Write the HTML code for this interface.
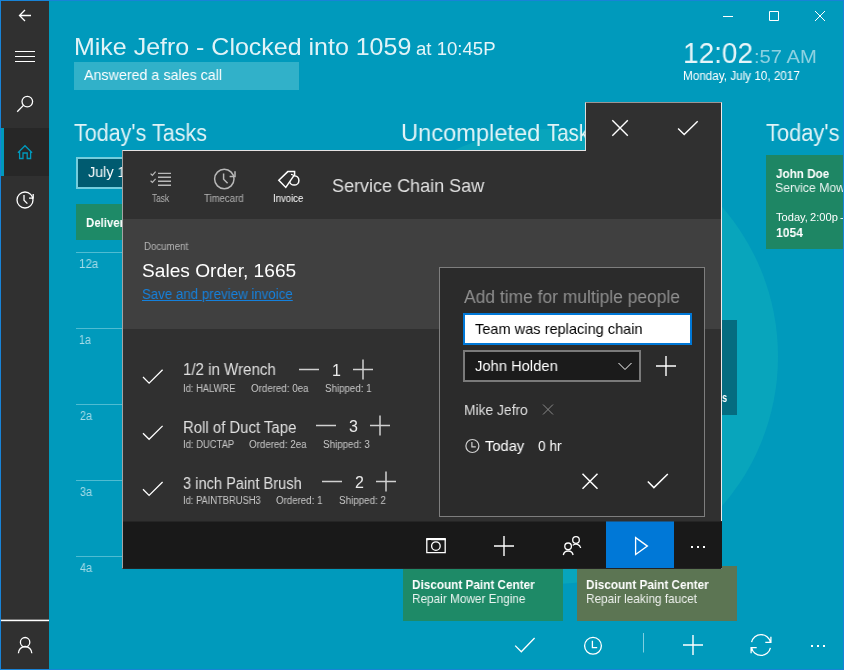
<!DOCTYPE html>
<html lang="en">
<head>
<meta charset="utf-8">
<title>Mike Jefro - Service Chain Saw</title>
<style>
html,body{margin:0;padding:0}
body{width:844px;height:670px;overflow:hidden;position:relative;background:#009abc;font-family:"Liberation Sans",sans-serif;}
#app{position:absolute;left:0;top:0;width:844px;height:670px;overflow:hidden}
.a{position:absolute}
.t{position:absolute;white-space:nowrap;line-height:1;transform-origin:0 0;will-change:transform;font-weight:400;color:#fff}
.b{font-weight:700}
svg{position:absolute;left:0;top:0;overflow:visible}
.s{fill:none;stroke:#fff;stroke-width:1.3}
.g{fill:none;stroke:#b8b8b8;stroke-width:1.5}
.hl{position:absolute;left:76px;width:300px;height:1px;background:#4fbcd2}
.card{position:absolute}
</style>
</head>
<body>
<div id="app">

<!-- decorative circle behind content -->
<div class="a" style="left:323px;top:129px;width:454.5px;height:454.5px;border-radius:50%;background:#08a5bc"></div>

<main>
<header>
<span class="t" style="left:73.5px;top:35px;font-size:24px;color:rgba(255,255,255,.88);transform:scaleX(1.0405);">Mike Jefro - Clocked into 1059</span>
<span class="t" style="left:416.0px;top:40px;font-size:18px;color:rgba(255,255,255,.9);transform:scaleX(1.0325);">at 10:45P</span>

<div class="a" style="left:74px;top:62px;width:225px;height:28px;background:#31b1c9"></div>
<span class="t" style="left:84.3px;top:67px;font-size:15px;transform:scaleX(0.9517);">Answered a sales call</span>

<span class="t" style="left:682.6px;top:39px;font-size:29px;color:rgba(255,255,255,.9);transform:scaleX(0.9643);">12:02</span>
<span class="t" style="left:753.9px;top:47px;font-size:19px;color:rgba(255,255,255,.55);transform:scaleX(1.0632);">:57 AM</span>

<span class="t" style="left:682.6px;top:70px;font-size:12px;transform:scaleX(0.9748);">Monday, July 10, 2017</span>

<!-- window controls -->
<svg width="844" height="40">
<path class="s" style="stroke-width:1" d="M723 16.5H733 M769.5 11.5H778.5V20.5H769.5Z M815 11L825 21M825 11L815 21"/>
</svg>
</header>

<section id="todays-tasks">
<span class="t" style="left:74.2px;top:122px;font-size:23px;color:rgba(255,255,255,.88);transform:scaleX(0.9366);">Today&#39;s Tasks</span>

<div class="a" style="left:76px;top:157px;width:200px;height:32px;box-sizing:border-box;border:2px solid #74cddd;background:#005b70"></div>
<span class="t" style="left:87.5px;top:164px;font-size:15px;transform:scaleX(0.9574);">July 10</span>

<div class="card" style="left:76px;top:204px;width:200px;height:36px;background:#1e8a67"></div>
<span class="t b" style="left:86.1px;top:216px;font-size:13px;transform:scaleX(0.8800);">Delivery</span>

<div class="hl" style="top:252px"></div><span class="t" style="left:78.7px;top:258px;font-size:12px;color:rgba(255,255,255,.65);transform:scaleX(0.9632);">12a</span>

<div class="hl" style="top:328px"></div><span class="t" style="left:78.8px;top:334px;font-size:12px;color:rgba(255,255,255,.65);transform:scaleX(0.8846);">1a</span>

<div class="hl" style="top:404px"></div><span class="t" style="left:79.7px;top:410px;font-size:12px;color:rgba(255,255,255,.65);transform:scaleX(0.8929);">2a</span>

<div class="hl" style="top:480px"></div><span class="t" style="left:79.7px;top:486px;font-size:12px;color:rgba(255,255,255,.65);transform:scaleX(0.8929);">3a</span>

<div class="hl" style="top:556px"></div><span class="t" style="left:79.7px;top:562px;font-size:12px;color:rgba(255,255,255,.65);transform:scaleX(0.8929);">4a</span>

</section>

<section id="uncompleted-tasks">
<span class="t" style="left:401.0px;top:121px;font-size:24px;color:rgba(255,255,255,.88);transform:scaleX(0.9855);">Uncompleted</span>
<span class="t" style="left:547.2px;top:121px;font-size:24px;color:rgba(255,255,255,.88);transform:scaleX(0.8525);">Tasks</span>

<div class="card" style="left:560px;top:320px;width:177px;height:95px;background:#056c80"></div>
<span class="t b" style="left:722.0px;top:391px;font-size:13px;transform:scaleX(0.7143);">s</span>

<div class="card" style="left:403px;top:566px;width:160px;height:55px;background:#1e8a67"></div>
<span class="t b" style="left:412.3px;top:578px;font-size:13px;transform:scaleX(0.9037);">Discount Paint Center</span>
<span class="t" style="left:412.3px;top:592px;font-size:13px;color:rgba(255,255,255,.9);transform:scaleX(0.9073);">Repair Mower Engine</span>

<div class="card" style="left:577px;top:566px;width:160px;height:55px;background:#5c7553"></div>
<span class="t b" style="left:586.1px;top:578px;font-size:13px;transform:scaleX(0.9037);">Discount Paint Center</span>
<span class="t" style="left:586.1px;top:592px;font-size:13px;color:rgba(255,255,255,.9);transform:scaleX(0.9091);">Repair leaking faucet</span>

</section>

<section id="todays-appointments">
<span class="t" style="left:766.4px;top:122px;font-size:23px;color:rgba(255,255,255,.88);transform:scaleX(0.9519);">Today&#39;s</span>

<div class="card" style="left:766px;top:155px;width:78px;height:94px;background:#1e8664"></div>
<span class="t b" style="left:776.3px;top:167px;font-size:13px;transform:scaleX(0.8983);">John Doe</span>
<span class="t" style="left:775.4px;top:181px;font-size:13px;color:rgba(255,255,255,.9);transform:scaleX(0.9412);">Service Mower</span>
<span class="t" style="left:776.3px;top:212px;font-size:11px;transform:scaleX(1.0104);word-spacing:-1px;">Today, 2:00p - 5:00p</span>
<span class="t b" style="left:776.3px;top:226px;font-size:13px;transform:scaleX(0.9310);">1054</span>

</section>

<!-- bottom command bar -->
<footer>
<svg width="844" height="670">
<path class="s" d="M515.2 645.6L521.3 651.7L534.6 638"/>
<circle class="s" cx="593" cy="645.8" r="8.4"/>
<path class="s" d="M592.4 640.8V647.6H597.2"/>
<path d="M643.5 633V652.5" stroke="#7fcfe0" stroke-width="1" fill="none"/>
<path class="s" style="stroke-width:1.4" d="M683 645H703M693 635V655"/>
<path class="s" d="M751.6 642.2A9.6 9.6 0 0 1 770.4 642.2M770.9 636.8V642.4H765.3M770.4 647.8A9.6 9.6 0 0 1 751.6 647.8M751.1 653.2V647.6H756.7"/>
<path fill="#fff" d="M811 645h2v2h-2zM817 645h2v2h-2zM823 645h2v2h-2z"/>
</svg>
</footer>
</main>

<!-- left navigation rail -->
<nav>
<div class="a" style="left:1px;top:1px;width:48px;height:668px;background:#303030"></div>
<div class="a" style="left:1px;top:128px;width:48px;height:48px;background:#272727"></div>
<div class="a" style="left:1px;top:128px;width:3px;height:48px;background:#0099bc"></div>
<div class="a" style="left:1px;top:619px;width:48px;height:1px;background:#777"></div>
<div class="a" style="left:1px;top:620px;width:48px;height:1px;background:#fff"></div>
<div class="a" style="left:1px;top:621px;width:48px;height:1px;background:#5a5a5a"></div>
<svg width="50" height="670">
<path class="s" d="M31 15.5H19.5M25 10L19.5 15.5L25 21"/>
<path class="s" style="stroke-width:1" d="M15 51.5H35M15 56.5H35M15 61.5H35"/>
<circle class="s" cx="27.3" cy="101.6" r="5.3"/><path class="s" d="M23.4 105.4L17.2 111.8"/>
<path style="fill:none;stroke:#0099bc;stroke-width:1.3" d="M17.9 152.8L25 145.7L32.1 152.8M19.6 151.5V158.5H23V153H27.2V158.5H30.6V151.5"/>
<circle class="s" cx="25" cy="200" r="8"/><path class="s" d="M29 198.2H33.2V194M24 195V200.2L27.4 203.6"/>
<circle class="s" cx="25.1" cy="642.2" r="4.7"/><path class="s" d="M18.4 653.2A6.7 6.7 0 0 1 31.8 653.2"/>
</svg>
</nav>

<!-- ===== task dialog ===== -->
<div id="task-dialog" role="dialog">
<!-- close / accept tab -->
<div class="a" style="left:585px;top:102px;width:137px;height:50px;box-sizing:border-box;border:1px solid #efebeb;border-top-color:#9c9595;border-left-color:#dcdcdc;border-bottom:0;background:#303030"></div>
<div class="a" style="left:122px;top:150px;width:600px;height:419px;box-sizing:border-box;border:1px solid #efebeb;border-top-color:#e6e2e2;border-left-color:#a4a4a4;border-bottom:0;background:#303030"></div>
<div class="a" style="left:586px;top:150px;width:135px;height:2px;background:#303030"></div>
<svg width="844" height="160">
<path class="s" style="stroke-width:1.4" d="M612.3 120.2L627.8 135.7M627.8 120.2L612.3 135.7"/>
<path class="s" style="stroke-width:1.4" d="M678.1 128.5L684.2 134.6L697.7 121.2"/>
</svg>

<!-- dialog header: view tabs + title -->
<div id="dialog-header">
<svg width="844" height="220">
<path class="g" style="stroke-width:1.4" d="M158 173.4H171M158 177.3H171M158 181.3H171M158 185.2H171"/>
<path class="g" style="stroke-width:1.2" d="M150.6 173.6L152.4 175.3L155.6 171.6M150.6 180.8L152.4 182.5L155.6 178.8"/>
<circle class="g" cx="224.3" cy="179" r="9.7"/><path class="g" d="M229.6 176.6H235V171.2M223.6 173.6V179.2L227.6 183.2"/>
<circle class="s" style="stroke-width:1.5" cx="294.2" cy="180.4" r="4.7"/>
<path style="fill:#303030;stroke:#fff;stroke-width:1.5" d="M278.8 180.2L287.8 171.6H294.6V174.6L285.8 187.4Z"/>
<path class="s" style="stroke-width:1.2" d="M291 174.4A4.7 4.7 0 0 1 293.8 175.6"/>
</svg>
<span class="t" style="left:152.3px;top:194px;font-size:10px;color:#b4b4b4;transform:scaleX(0.8333);">Task</span>
<span class="t" style="left:204.0px;top:194px;font-size:10px;color:#b4b4b4;transform:scaleX(0.9585);">Timecard</span>
<span class="t" style="left:272.5px;top:194px;font-size:10px;transform:scaleX(0.9581);">Invoice</span>

<span class="t" style="left:332.4px;top:176px;font-size:19px;color:rgba(255,255,255,.85);transform:scaleX(0.9481);">Service Chain Saw</span>

</div>

<!-- document section -->
<div id="dialog-document">
<div class="a" style="left:123px;top:219px;width:598px;height:110px;background:#404040"></div>
<span class="t" style="left:143.5px;top:242px;font-size:10px;color:#b4b4b4;transform:scaleX(0.9674);">Document</span>

<span class="t" style="left:141.5px;top:261px;font-size:19px;transform:scaleX(1.0066);">Sales Order, 1665</span>

<span class="t" style="left:141.6px;top:287px;font-size:14px;color:#1581dd;transform:scaleX(0.9494);text-decoration:underline;">Save and preview invoice</span>

</div>

<!-- line items -->
<div id="dialog-items">
<svg width="844" height="520">
<path class="s" d="M143 377L149.1 383.1L162.6 369.7"/>
<path class="g" style="stroke:#d0d0d0" d="M299 369.5H319M353 369.5H373M363 359.5V379.5"/>
<path class="s" d="M143 433.2L149.1 439.3L162.6 425.9"/>
<path class="g" style="stroke:#d0d0d0" d="M316 425.5H336M370 425.5H390M380 415.5V435.5"/>
<path class="s" d="M143 489.3L149.1 495.4L162.6 482"/>
<path class="g" style="stroke:#d0d0d0" d="M322 481.5H342M376 481.5H396M386 471.5V491.5"/>
</svg>
<span class="t" style="left:182.9px;top:362px;font-size:16px;color:rgba(255,255,255,.85);transform:scaleX(0.9423);">1/2 in Wrench</span>
<span class="t" style="left:331.8px;top:363px;font-size:16px;color:rgba(255,255,255,.9);transform:scaleX(0.9500);">1</span>
<span class="t" style="left:183.0px;top:384px;font-size:10px;color:#c8c8c8;transform:scaleX(0.9382);">Id: HALWRE</span>
<span class="t" style="left:251.2px;top:384px;font-size:10px;color:#c8c8c8;transform:scaleX(0.9763);">Ordered: 0ea</span>
<span class="t" style="left:325.1px;top:384px;font-size:10px;color:#c8c8c8;transform:scaleX(0.9729);">Shipped: 1</span>

<span class="t" style="left:182.7px;top:420px;font-size:16px;color:rgba(255,255,255,.85);transform:scaleX(0.9325);">Roll of Duct Tape</span>
<span class="t" style="left:349.0px;top:419px;font-size:16px;color:rgba(255,255,255,.9);transform:scaleX(0.9500);">3</span>
<span class="t" style="left:183.0px;top:440px;font-size:10px;color:#c8c8c8;transform:scaleX(0.9453);">Id: DUCTAP</span>
<span class="t" style="left:249.3px;top:440px;font-size:10px;color:#c8c8c8;transform:scaleX(0.9780);">Ordered: 2ea</span>
<span class="t" style="left:323.2px;top:440px;font-size:10px;color:#c8c8c8;transform:scaleX(0.9792);">Shipped: 3</span>

<span class="t" style="left:183.3px;top:476px;font-size:16px;color:rgba(255,255,255,.85);transform:scaleX(0.9140);">3 inch Paint Brush</span>
<span class="t" style="left:355.3px;top:475px;font-size:16px;color:rgba(255,255,255,.9);transform:scaleX(0.9500);">2</span>
<span class="t" style="left:183.0px;top:496px;font-size:10px;color:#c8c8c8;transform:scaleX(0.9341);">Id: PAINTBRUSH3</span>
<span class="t" style="left:276.2px;top:496px;font-size:10px;color:#c8c8c8;transform:scaleX(0.9708);">Ordered: 1</span>
<span class="t" style="left:339.1px;top:496px;font-size:10px;color:#c8c8c8;transform:scaleX(0.9813);">Shipped: 2</span>

</div>

<!-- dialog command bar -->
<div id="dialog-commands">
<div class="a" style="left:123px;top:521px;width:599px;height:1px;background:#252525"></div>
<div class="a" style="left:123px;top:522px;width:599px;height:46px;background:#191919"></div>
<div class="a" style="left:122px;top:568px;width:600px;height:1px;background:rgba(25,25,25,.55)"></div>
<div class="a" style="left:606px;top:521px;width:68px;height:1px;background:#1b5483"></div>
<div class="a" style="left:606px;top:522px;width:68px;height:46px;background:#0078d7"></div>
<svg width="844" height="570">
<path class="s" d="M426.8 539.4H445.2V552.6H426.8Z"/><path fill="#fff" d="M426.2 538H445.8V540.2H431.2V539.2H428.6V540.2H426.2Z"/><circle class="s" cx="435.9" cy="546.1" r="4.3"/>
<path class="s" style="stroke-width:1.4" d="M494 546H514M504 536V556"/>
<circle class="s" cx="576" cy="540" r="3.3"/><path class="s" d="M572.7 545.4A4.8 4.8 0 0 1 580.7 548"/>
<circle class="s" cx="568.1" cy="546.3" r="3.3"/><path class="s" d="M563.3 555A5 5 0 0 1 573.1 555"/>
<path class="s" d="M635.6 537.6V554.6L647.4 546.1Z"/>
<path fill="#fff" d="M691 546h2v2h-2zM697 546h2v2h-2zM703 546h2v2h-2z"/>
</svg>
</div>

<!-- add time for multiple people popup -->
<div id="multi-time" role="dialog">
<div class="a" style="left:439px;top:267px;width:266px;height:250px;box-sizing:border-box;border:1px solid #7e7e7e;background:#2b2b2b"></div>
<span class="t" style="left:464.0px;top:288px;font-size:18px;color:#8f8f8f;transform:scaleX(0.9686);">Add time for multiple people</span>

<div class="a" style="left:463px;top:313px;width:229px;height:32px;box-sizing:border-box;border:2px solid #0078d7;background:#fff"></div>
<span class="t" style="left:474.7px;top:321px;font-size:15px;color:#000;transform:scaleX(0.9709);">Team was replacing chain</span>

<div class="a" style="left:463px;top:350px;width:178px;height:32px;box-sizing:border-box;border:2px solid #7a7a7a;background:#1b1b1b"></div>
<span class="t" style="left:474.7px;top:358px;font-size:15px;transform:scaleX(0.9821);">John Holden</span>

<span class="t" style="left:464.1px;top:402px;font-size:15px;color:rgba(255,255,255,.85);transform:scaleX(0.9221);">Mike Jefro</span>

<span class="t" style="left:485.0px;top:438px;font-size:15px;transform:scaleX(0.9800);">Today</span>
<span class="t" style="left:537.7px;top:438px;font-size:15px;transform:scaleX(0.9154);">0 hr</span>

<svg width="844" height="520">
<path class="s" style="stroke-width:1" d="M618.5 363L625 369.5L631.5 363"/>
<path class="s" style="stroke-width:1.4" d="M656 366H676M666 356V376"/>
<path class="g" style="stroke:#8a8a8a;stroke-width:1" d="M543 404.5L553 414.5M553 404.5L543 414.5"/>
<circle class="g" style="stroke:#d0d0d0;stroke-width:1.2" cx="472.4" cy="446" r="6.5"/><path class="g" style="stroke:#d0d0d0;stroke-width:1.2" d="M471.9 442V446.8H475.8"/>
<path class="s" style="stroke-width:1.5" d="M582.5 473.8L597.5 488.8M597.5 473.8L582.5 488.8"/>
<path class="s" style="stroke-width:1.5" d="M647.8 481.5L653.9 487.6L667.8 474"/>
</svg>
</div>
</div>

<!-- window frame -->
<div class="a" style="left:0;top:0;width:844px;height:670px;box-sizing:border-box;border:1px solid #1883d7"></div>
</div>
</body>
</html>
